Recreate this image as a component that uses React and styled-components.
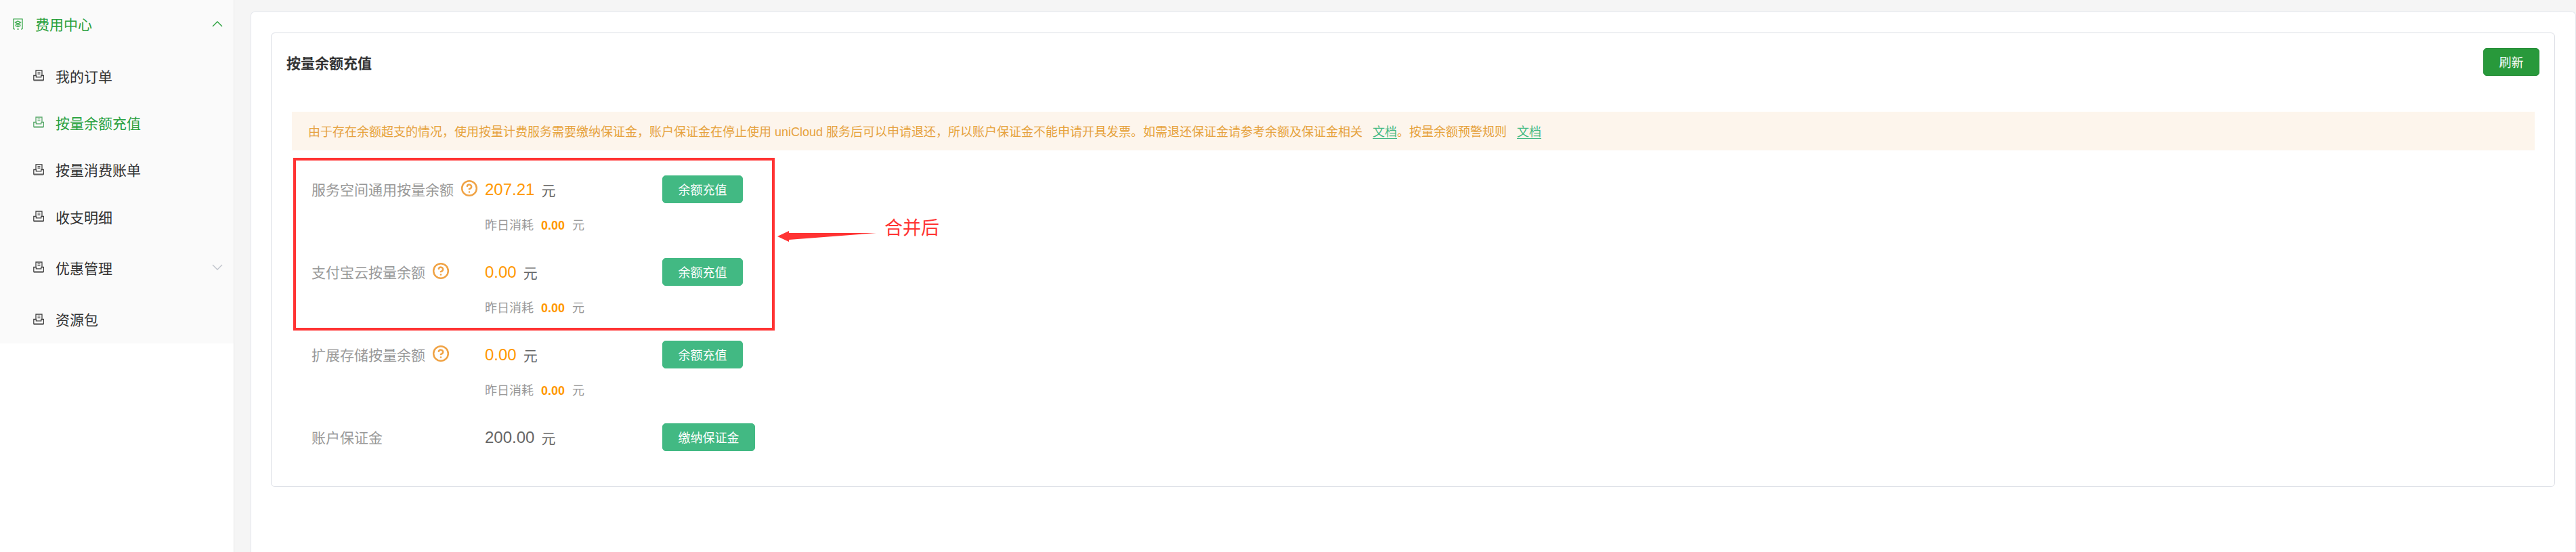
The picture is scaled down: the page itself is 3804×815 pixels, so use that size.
import React from "react"
import styled, { createGlobalStyle } from "styled-components"
import { CircleHelp } from "lucide-react"

const Global = createGlobalStyle`
  html, body { margin: 0; padding: 0; background: #fff; }
  body { font-family: "Liberation Sans", "Noto Sans CJK SC", sans-serif; color: #333; }
  * { box-sizing: border-box; }
`

const Page = styled.div`
  display: flex;
  width: 3804px;
  height: 815px;
  overflow: hidden;
`
const Side = styled.aside`
  width: 346px;
  flex: none;
  background: #fff;
  border-right: 1px solid #e8e8e8;
`
const Menu = styled.ul`
  margin: 0;
  padding: 0;
  list-style: none;
  height: 507px;
  background: #fafafa;
`
const MenuRow = styled.li`
  display: flex;
  align-items: center;
  height: ${p => p.$h}px;
  padding-left: ${p => (p.$top ? 18 : 49)}px;
  padding-bottom: 2px;
  margin-bottom: ${p => p.$mb || 0}px;
  font-size: 21px;
  color: ${p => (p.$on ? "#28a03c" : "#333")};
  svg.lead { flex: none; margin-right: 17px; }
`
const Caret = styled.svg`
  margin-left: auto;
  margin-right: 16px;
  flex: none;
`
const Main = styled.main`
  flex: 1;
  background: #f5f5f5;
  padding: 17px 0 0 24px;
`
const Outer = styled.section`
  height: 798px;
  background: #fff;
  border: 1px solid #e4e7ed;
  border-bottom: none;
  border-radius: 6px 6px 0 0;
  padding: 30px 30px 0 29px;
`
const Card = styled.div`
  position: relative;
  height: 671px;
  border: 1px solid #dcdfe6;
  border-radius: 6px;
  padding: 22px 22px 0 19px;
`
const Head = styled.div`
  display: flex;
  justify-content: space-between;
  align-items: center;
`
const Title = styled.h2`
  margin: 0 0 0 3px;
  font-size: 21px;
  font-weight: 700;
  color: #333;
`
const Button = styled.button`
  height: 41px;
  padding: 0 22.5px 2px;
  font: inherit;
  font-size: 18px;
  color: #fff;
  border-radius: 5px;
  border: 1px solid ${p => (p.$dark ? "#238c35" : "#42b983")};
  background: ${p => (p.$dark ? "#28993b" : "#42b983")};
  white-space: nowrap;
`
const Alert = styled.div`
  margin: 53px 7px 37px 11px;
  height: 57px;
  display: flex;
  align-items: center;
  padding: 0 0 2px 24px;
  background: #fdf5ec;
  color: #e6a23c;
  font-size: 18px;
  white-space: pre;
`
const DocLink = styled.a`
  color: #42b983;
  text-decoration: underline;
  text-underline-offset: 3px;
  margin-left: 15px;
`
const Rows = styled.div`
  display: flex;
  flex-direction: column;
  padding-left: 40px;
`
const Row = styled.div`
  display: grid;
  grid-template-columns: 256px 262px max-content;
  grid-template-rows: 41px 1fr;
  height: 122px;
  align-items: center;
`
const Label = styled.div`
  display: flex;
  align-items: center;
  padding-bottom: 2px;
  font-size: 21px;
  color: #999;
  svg { margin: -2px 0 0 10px; color: #f0a345; }
`
const Amount = styled.div`
  display: flex;
  align-items: center;
  gap: 10px;
  font-size: 21px;
  color: #666;
`
const Figure = styled.span`
  font-size: 24px;
  color: ${p => (p.$plain ? "#666" : "#ff9800")};
`
const Sub = styled.div`
  grid-column: 2;
  align-self: start;
  margin-top: 23px;
  display: flex;
  gap: 11px;
  font-size: 18px;
  line-height: 20px;
  color: #999;
  b { color: #ff9800; font-weight: 700; }
  span + span { margin-left: -4px; }
`
const Overlay = styled.div`
  position: absolute;
  left: 32px;
  top: 184px;
  width: 711px;
  height: 255px;
  border: 4px solid #ff3333;
  pointer-events: none;
`
const ArrowMark = styled.svg`
  position: absolute;
  left: 747px;
  top: 291px;
`
const Note = styled.div`
  position: absolute;
  left: 905px;
  top: 270px;
  font-size: 27px;
  line-height: 36px;
  color: #ff3333;
`

const TrayIcon = ({ color }) => (
  <svg className="lead" width="16" height="17" viewBox="0 0 16 17" fill="none" stroke={color} strokeWidth="1.3">
    <path d="M4 8.5V1h9v7.5" />
    <path d="M6.5 3.6h4M6.5 6.2h4" />
    <path d="M.8 8.5h3.6v2.4h7.4V8.5h3.6v6.6H.8z" />
    <path d="M.8 16.2h14.4" strokeWidth="1.5" opacity=".6" />
  </svg>
)

const StackIcon = ({ color }) => (
  <svg className="lead" width="17" height="17" viewBox="0 0 17 17" fill="none" stroke={color} strokeWidth="1.2">
    <path d="M2 16V1h13v15" />
    <path d="M8.5 4 12.5 6 8.5 8 4.5 6z" />
    <path d="M4.5 8.2 8.5 10.2 12.5 8.2M4.5 10.6 8.5 12.6 12.5 10.6" />
    <path d="M2 16h2M7 16h3M13 16h2" />
  </svg>
)

const Chevron = ({ up, color }) => (
  <Caret width="16" height="10" viewBox="0 0 16 10" fill="none" stroke={color} strokeWidth="1.4">
    <path d={up ? "M1 9 8 2l7 7" : "M1 1l7 7 7-7"} />
  </Caret>
)

const Help = () => <CircleHelp size={26} strokeWidth={2.3} />

const balances = [
  { name: "服务空间通用按量余额", value: "207.21" },
  { name: "支付宝云按量余额", value: "0.00" },
  { name: "扩展存储按量余额", value: "0.00" },
]

export default function App() {
  return (
    <Page>
      <Global />
      <Side>
        <Menu>
          <MenuRow $top $on $h={72} $mb={6}>
            <StackIcon color="#28a03c" />费用中心<Chevron up color="#28a03c" />
          </MenuRow>
          <MenuRow $h={69}><TrayIcon color="#444" />我的订单</MenuRow>
          <MenuRow $on $h={69}><TrayIcon color="#5aa96b" />按量余额充值</MenuRow>
          <MenuRow $h={70}><TrayIcon color="#444" />按量消费账单</MenuRow>
          <MenuRow $h={69}><TrayIcon color="#444" />收支明细</MenuRow>
          <MenuRow $h={81}><TrayIcon color="#444" />优惠管理<Chevron color="#c0c4cc" /></MenuRow>
          <MenuRow $h={72}><TrayIcon color="#444" />资源包</MenuRow>
        </Menu>
      </Side>
      <Main>
        <Outer>
          <Card>
            <Head>
              <Title>按量余额充值</Title>
              <Button $dark>刷新</Button>
            </Head>
            <Alert>
              由于存在余额超支的情况，使用按量计费服务需要缴纳保证金，账户保证金在停止使用 uniCloud 服务后可以申请退还，所以账户保证金不能申请开具发票。如需退还保证金请参考余额及保证金相关
              <DocLink>文档</DocLink>。按量余额预警规则<DocLink>文档</DocLink>
            </Alert>
            <Rows>
              {balances.map(b => (
                <Row key={b.name}>
                  <Label>{b.name}<Help /></Label>
                  <Amount><Figure>{b.value}</Figure>元</Amount>
                  <Button>余额充值</Button>
                  <Sub><span>昨日消耗</span><b>0.00</b><span>元</span></Sub>
                </Row>
              ))}
              <Row>
                <Label>账户保证金</Label>
                <Amount><Figure $plain>200.00</Figure>元</Amount>
                <Button>缴纳保证金</Button>
              </Row>
            </Rows>
            <Overlay />
            <ArrowMark width="148" height="20" viewBox="0 0 148 20">
              <path d="M0 9 17 1v3L145 4 146 4 17 14v3z" fill="#ff3333" />
            </ArrowMark>
            <Note>合并后</Note>
          </Card>
        </Outer>
      </Main>
    </Page>
  )
}
